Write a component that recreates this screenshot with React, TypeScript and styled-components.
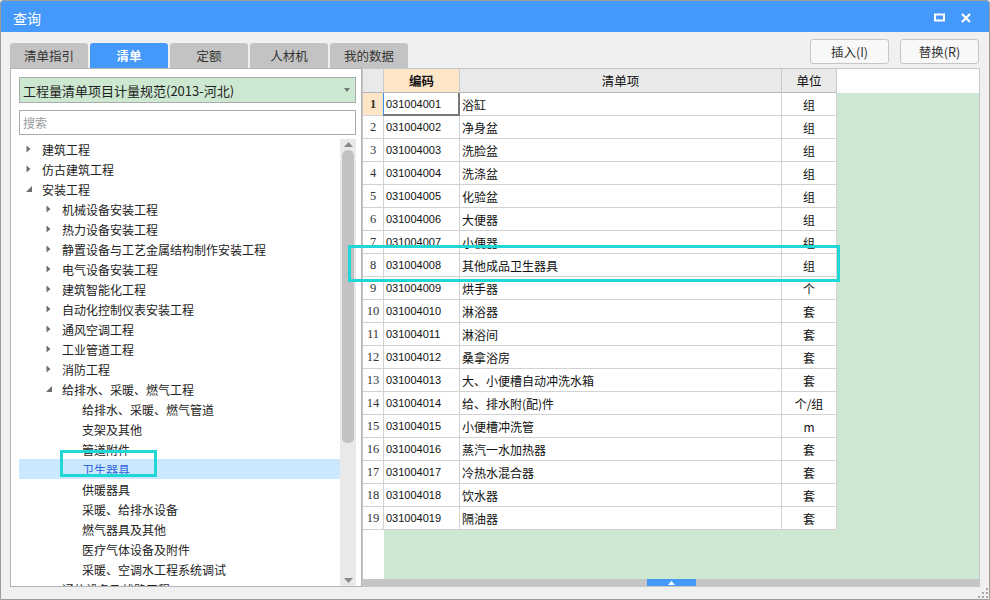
import React from 'react';
import styled, { createGlobalStyle } from 'styled-components';

const GlobalStyle = createGlobalStyle`
  html, body {
    margin: 0;
    padding: 0;
    background: #ffffff;
  }
  body {
    font-family: 'Noto Sans CJK SC', 'Liberation Sans', sans-serif;
  }
  * {
    box-sizing: border-box;
  }
`;

const tabs = ['清单指引', '清单', '定额', '人材机', '我的数据'];

type TreeNode = { label: string; level: number; arrow?: 'closed' | 'open'; selected?: boolean };

const tree: TreeNode[] = [
  { label: '建筑工程', level: 0, arrow: 'closed' },
  { label: '仿古建筑工程', level: 0, arrow: 'closed' },
  { label: '安装工程', level: 0, arrow: 'open' },
  { label: '机械设备安装工程', level: 1, arrow: 'closed' },
  { label: '热力设备安装工程', level: 1, arrow: 'closed' },
  { label: '静置设备与工艺金属结构制作安装工程', level: 1, arrow: 'closed' },
  { label: '电气设备安装工程', level: 1, arrow: 'closed' },
  { label: '建筑智能化工程', level: 1, arrow: 'closed' },
  { label: '自动化控制仪表安装工程', level: 1, arrow: 'closed' },
  { label: '通风空调工程', level: 1, arrow: 'closed' },
  { label: '工业管道工程', level: 1, arrow: 'closed' },
  { label: '消防工程', level: 1, arrow: 'closed' },
  { label: '给排水、采暖、燃气工程', level: 1, arrow: 'open' },
  { label: '给排水、采暖、燃气管道', level: 2 },
  { label: '支架及其他', level: 2 },
  { label: '管道附件', level: 2 },
  { label: '卫生器具', level: 2, selected: true },
  { label: '供暖器具', level: 2 },
  { label: '采暖、给排水设备', level: 2 },
  { label: '燃气器具及其他', level: 2 },
  { label: '医疗气体设备及附件', level: 2 },
  { label: '采暖、空调水工程系统调试', level: 2 },
  { label: '通信设备及线路工程', level: 1, arrow: 'closed' },
];

const rows: [string, string, string][] = [
  ['031004001', '浴缸', '组'],
  ['031004002', '净身盆', '组'],
  ['031004003', '洗脸盆', '组'],
  ['031004004', '洗涤盆', '组'],
  ['031004005', '化验盆', '组'],
  ['031004006', '大便器', '组'],
  ['031004007', '小便器', '组'],
  ['031004008', '其他成品卫生器具', '组'],
  ['031004009', '烘手器', '个'],
  ['031004010', '淋浴器', '套'],
  ['031004011', '淋浴间', '套'],
  ['031004012', '桑拿浴房', '套'],
  ['031004013', '大、小便槽自动冲洗水箱', '套'],
  ['031004014', '给、排水附(配)件', '个/组'],
  ['031004015', '小便槽冲洗管', 'm'],
  ['031004016', '蒸汽一水加热器', '套'],
  ['031004017', '冷热水混合器', '套'],
  ['031004018', '饮水器', '套'],
  ['031004019', '隔油器', '套'],
];

const App = () => {
  return (
    <Window>
      <GlobalStyle />
      <TitleBar>
        <Title>查询</Title>
        <TitleIcons>
          <svg width="11" height="9" viewBox="0 0 11 9">
            <rect x="1" y="1.5" width="9" height="6" fill="none" stroke="#fff" strokeWidth="2" />
          </svg>
          <svg width="10" height="10" viewBox="0 0 10 10">
            <path d="M1 1 L9 9 M9 1 L1 9" stroke="#fff" strokeWidth="2.2" />
          </svg>
        </TitleIcons>
      </TitleBar>

      <Body>
        <HeaderRow>
          <Tabs>
            {tabs.map((t) => (
              <Tab key={t} $active={t === '清单'}>
                {t}
              </Tab>
            ))}
          </Tabs>
          <Buttons>
            <Button>插入(I)</Button>
            <Button>替换(R)</Button>
          </Buttons>
        </HeaderRow>

        <Main>
          <LeftPanel>
            <Select>
              <span>工程量清单项目计量规范(2013-河北)</span>
              <SelectArrow />
            </Select>
            <Search placeholder="搜索" />
            <TreeWrap>
              <TreeList>
                {tree.map((n, i) => (
                  <TreeRow key={i} $level={n.level} $selected={!!n.selected}>
                    <Arrow>
                      {n.arrow === 'closed' && (
                        <svg width="5" height="8" viewBox="0 0 5 8">
                          <path d="M0.5 0.5 L4.5 4 L0.5 7.5 Z" fill="#6e6e6e" />
                        </svg>
                      )}
                      {n.arrow === 'open' && (
                        <svg width="6" height="6" viewBox="0 0 6 6">
                          <path d="M6 0 L6 6 L0 6 Z" fill="#6e6e6e" />
                        </svg>
                      )}
                    </Arrow>
                    {n.label}
                  </TreeRow>
                ))}
              </TreeList>
              <VScroll>
                <ScrollArrow>
                  <svg width="9" height="5" viewBox="0 0 9 5">
                    <path d="M0 5 L4.5 0 L9 5 Z" fill="#8a8a8a" />
                  </svg>
                </ScrollArrow>
                <Thumb />
                <ScrollSpacer />
                <ScrollArrow>
                  <svg width="9" height="5" viewBox="0 0 9 5">
                    <path d="M0 0 L4.5 5 L9 0 Z" fill="#8a8a8a" />
                  </svg>
                </ScrollArrow>
              </VScroll>
            </TreeWrap>
          </LeftPanel>

          <Grid>
            <GridHead>
              <HeadCell $w={21} />
              <HeadCell $w={76} $peach $bold>
                编码
              </HeadCell>
              <HeadCell $w={322}>清单项</HeadCell>
              <HeadCell $w={55}>单位</HeadCell>
            </GridHead>
            <GridBody>
              {rows.map((r, i) => (
                <Row key={r[0]}>
                  <NumCell $peach={i === 0} $bold={i === 0}>
                    {i + 1}
                  </NumCell>
                  <CodeCell $current={i === 0}>{r[0]}</CodeCell>
                  <ItemCell>{r[1]}</ItemCell>
                  <UnitCell>{r[2]}</UnitCell>
                </Row>
              ))}
            </GridBody>
            <HScroll>
              <HThumb>
                <svg width="7" height="4" viewBox="0 0 7 4">
                  <path d="M0 4 L3.5 0 L7 4 Z" fill="#fff" />
                </svg>
              </HThumb>
            </HScroll>
          </Grid>
        </Main>
        <Grip>
          <svg width="10" height="10" viewBox="0 0 10 10">
            <rect x="8" y="0" width="2" height="2" fill="#a8a8a8" />
            <rect x="4" y="4" width="2" height="2" fill="#a8a8a8" />
            <rect x="8" y="4" width="2" height="2" fill="#a8a8a8" />
            <rect x="0" y="8" width="2" height="2" fill="#a8a8a8" />
            <rect x="4" y="8" width="2" height="2" fill="#a8a8a8" />
            <rect x="8" y="8" width="2" height="2" fill="#a8a8a8" />
          </svg>
        </Grip>
      </Body>

      <Highlight $x={60} $y={450} $w={97} $h={27} />
      <Highlight $x={348} $y={245} $w={492} $h={37} />
    </Window>
  );
};

const Window = styled.div`
  position: relative;
  width: 990px;
  height: 600px;
  border: 1px solid #9c9c9c;
  border-radius: 3px 3px 0 0;
  background: #f0f0f0;
  display: flex;
  flex-direction: column;
  overflow: hidden;
`;

const TitleBar = styled.div`
  height: 31px;
  flex-shrink: 0;
  background: #4499fa;
  display: flex;
  align-items: center;
  justify-content: space-between;
  padding: 0 18px 0 12px;
`;

const Title = styled.div`
  color: #ffffff;
  font-size: 14px;
  margin-top: 2px;
`;

const TitleIcons = styled.div`
  display: flex;
  align-items: center;
  gap: 16px;
  margin-top: 2px;
`;

const Body = styled.div`
  position: relative;
  flex: 1;
  min-height: 0;
  display: flex;
  flex-direction: column;
  padding: 7px 9px 12px 9px;
`;

const HeaderRow = styled.div`
  height: 29px;
  flex-shrink: 0;
  display: flex;
  justify-content: space-between;
`;

const Tabs = styled.div`
  display: flex;
  gap: 2px;
  align-self: flex-end;
`;

const Tab = styled.div<{ $active?: boolean }>`
  width: 78px;
  height: 25px;
  border-radius: 3px 3px 0 0;
  display: flex;
  align-items: center;
  justify-content: center;
  font-size: 12.5px;
  background: ${(p) => (p.$active ? '#4499fa' : '#c3c3c3')};
  color: ${(p) => (p.$active ? '#ffffff' : '#333333')};
  font-weight: ${(p) => (p.$active ? 700 : 400)};
`;

const Buttons = styled.div`
  display: flex;
  gap: 11px;
  align-self: flex-start;
  margin-right: 1px;
`;

const Button = styled.div`
  width: 79px;
  height: 25px;
  background: #f8f8f8;
  border: 1px solid #c6c6c6;
  border-radius: 3px;
  font-size: 12.5px;
  color: #333;
  display: flex;
  align-items: center;
  justify-content: center;
`;

const Main = styled.div`
  flex: 1;
  display: flex;
  min-height: 0;
`;

const LeftPanel = styled.div`
  width: 352px;
  background: #ffffff;
  border: 1px solid #b4b4b4;
  padding: 8px 5px 0 8px;
  display: flex;
  flex-direction: column;
  min-height: 0;
`;

const Select = styled.div`
  position: relative;
  height: 26px;
  flex-shrink: 0;
  background: #cde8d1;
  border: 1px solid #ababab;
  display: flex;
  align-items: center;
  padding-left: 3px;
  font-size: 13px;
  color: #222;
`;

const SelectArrow = styled.div`
  position: absolute;
  right: 5px;
  top: 10px;
  width: 0;
  height: 0;
  border-left: 3.5px solid transparent;
  border-right: 3.5px solid transparent;
  border-top: 4px solid #777;
`;

const Search = styled.input`
  margin-top: 7px;
  height: 25px;
  flex-shrink: 0;
  border: 1px solid #ababab;
  padding: 0 3px;
  font-family: 'Noto Sans CJK SC', sans-serif;
  font-size: 12px;
  outline: none;
  &::placeholder {
    color: #9a9a9a;
  }
`;

const TreeWrap = styled.div`
  flex: 1;
  margin-top: 4px;
  margin-left: -8px;
  display: flex;
  min-height: 0;
`;

const TreeList = styled.div`
  flex: 1;
  overflow: hidden;
  padding-left: 8px;
`;

const TreeRow = styled.div<{ $level: number; $selected: boolean }>`
  height: 20px;
  display: flex;
  align-items: center;
  padding-left: ${(p) => p.$level * 20 + 7}px;
  font-size: 12px;
  white-space: nowrap;
  color: ${(p) => (p.$selected ? '#3366dd' : '#222222')};
  background: ${(p) => (p.$selected ? '#cce8ff' : 'transparent')};
`;

const Arrow = styled.span`
  width: 16px;
  display: inline-flex;
  align-items: center;
`;

const VScroll = styled.div`
  width: 16px;
  background: #e9e9e9;
  display: flex;
  flex-direction: column;
  align-items: center;
`;

const ScrollArrow = styled.div`
  height: 11px;
  flex-shrink: 0;
  display: flex;
  align-items: center;
  justify-content: center;
`;

const Thumb = styled.div`
  width: 12px;
  height: 293px;
  flex-shrink: 0;
  background: #c2c2c2;
  border-radius: 6px 6px 5px 5px;
`;

const ScrollSpacer = styled.div`
  flex: 1;
`;

const Grid = styled.div`
  flex: 1;
  min-height: 0;
  border: 1px solid #c6c6c6;
  background: #ffffff;
  display: flex;
  flex-direction: column;
  font-size: 12px;
  color: #111;
`;

const GridHead = styled.div`
  height: 24px;
  display: flex;
  flex-shrink: 0;
`;

const HeadCell = styled.div<{ $w: number; $peach?: boolean; $bold?: boolean }>`
  width: ${(p) => p.$w}px;
  height: 24px;
  background: ${(p) => (p.$peach ? '#fde5c8' : '#e9e9e9')};
  border-right: 1px solid #cbcbcb;
  border-bottom: 1px solid #b8b8b8;
  display: flex;
  align-items: center;
  justify-content: center;
  font-weight: ${(p) => (p.$bold ? 700 : 400)};
  font-size: 12.5px;
`;

const GridBody = styled.div`
  flex: 1;
  min-height: 0;
  background: linear-gradient(to right, #ffffff 21px, #cde7d1 21px);
  display: flex;
  flex-direction: column;
  overflow: hidden;
`;

const Row = styled.div`
  height: 23px;
  flex-shrink: 0;
  display: flex;
`;

const Cell = styled.div`
  height: 23px;
  background: #ffffff;
  border-right: 1px solid #d2d2d2;
  border-bottom: 1px solid #d2d2d2;
  display: flex;
  align-items: center;
  white-space: nowrap;
`;

const NumCell = styled(Cell)<{ $peach?: boolean; $bold?: boolean }>`
  width: 21px;
  justify-content: center;
  font-family: 'Liberation Serif', serif;
  font-size: 12.5px;
  color: #333;
  background: ${(p) => (p.$peach ? '#fde5c8' : '#ffffff')};
  font-weight: ${(p) => (p.$bold ? 700 : 400)};
`;

const CodeCell = styled(Cell)<{ $current?: boolean }>`
  width: 76px;
  padding-left: 2px;
  font-family: 'Liberation Sans', sans-serif;
  font-size: 11px;
  ${(p) =>
    p.$current &&
    `
    border-left: 1px solid #3f8fe8;
    border-right: 2px solid #777777;
    border-bottom: 2px solid #777777;
    margin-left: -1px;
    width: 77px;
  `}
`;

const ItemCell = styled(Cell)`
  width: 322px;
  padding-left: 2px;
  font-size: 12px;
`;

const UnitCell = styled(Cell)`
  width: 55px;
  justify-content: center;
  font-size: 12px;
`;

const HScroll = styled.div`
  height: 7px;
  flex-shrink: 0;
  background: #c5c5c5;
  display: flex;
  justify-content: center;
`;

const HThumb = styled.div`
  width: 49px;
  height: 7px;
  background: #4499fa;
  display: flex;
  align-items: center;
  justify-content: center;
`;

const Grip = styled.div`
  position: absolute;
  right: 1px;
  bottom: 1px;
  line-height: 0;
`;

const Highlight = styled.div<{ $x: number; $y: number; $w: number; $h: number }>`
  position: absolute;
  left: ${(p) => p.$x - 1}px;
  top: ${(p) => p.$y - 1}px;
  width: ${(p) => p.$w}px;
  height: ${(p) => p.$h}px;
  border: 3px solid #1fd8d6;
  pointer-events: none;
`;

export default App;
